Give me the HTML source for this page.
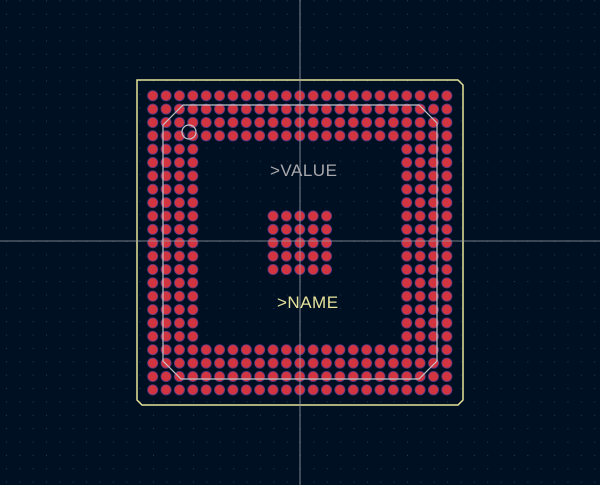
<!DOCTYPE html>
<html><head><style>
html,body{margin:0;padding:0;background:#001023;}
svg{display:block}
</style></head><body>
<svg width="600" height="485" xmlns="http://www.w3.org/2000/svg">
<defs>
<pattern id="g" x="5.9" y="0.3" width="13.37" height="13.37" patternUnits="userSpaceOnUse">
<rect x="0" y="0" width="1" height="1" fill="#2e3e52"/>
</pattern>
</defs>
<rect width="600" height="485" fill="#001023"/>
<rect width="600" height="485" fill="url(#g)"/>
<path d="M137 80 H458 L463 85 V400 L458 405 H142 L137 400 Z" fill="none" stroke="#e6e29a" stroke-width="1.5"/>
<g id="pads" fill="#d23440" stroke="#5a3a86" stroke-width="0.8"></g>
<path d="M183 105 H419 L437 123 V361 L419 379 H181 L163 361 V125 Z" fill="none" stroke="#c4c4c8" stroke-width="1.2"/>
<circle cx="189" cy="132" r="7" fill="none" stroke="#c4c4c8" stroke-width="1.2"/>
<line x1="0" y1="241" x2="600" y2="241" stroke="#9aa0a8" stroke-width="0.8"/>
<line x1="300" y1="0" x2="300" y2="485" stroke="#9aa0a8" stroke-width="0.8"/>
<text x="270" y="176" font-family="Liberation Sans, sans-serif" font-size="17" fill="#a8a8ac" letter-spacing="0.5">&gt;VALUE</text>
<text x="277" y="308" font-family="Liberation Sans, sans-serif" font-size="17" fill="#e6e29a" letter-spacing="0.5">&gt;NAME</text>
</svg>
<script>
var g=document.getElementById('pads');var ns='http://www.w3.org/2000/svg';
for(var r=0;r<23;r++)for(var c=0;c<23;c++){
var outer=(r<4||r>18||c<4||c>18);var center=(r>=9&&r<=13&&c>=9&&c<=13);
if(!outer&&!center)continue;
var e=document.createElementNS(ns,'circle');
e.setAttribute('cx',(152.7+c*13.37).toFixed(2));e.setAttribute('cy',(95.7+r*13.37).toFixed(2));e.setAttribute('r','5.1');
g.appendChild(e);}
</script>
</body></html>
